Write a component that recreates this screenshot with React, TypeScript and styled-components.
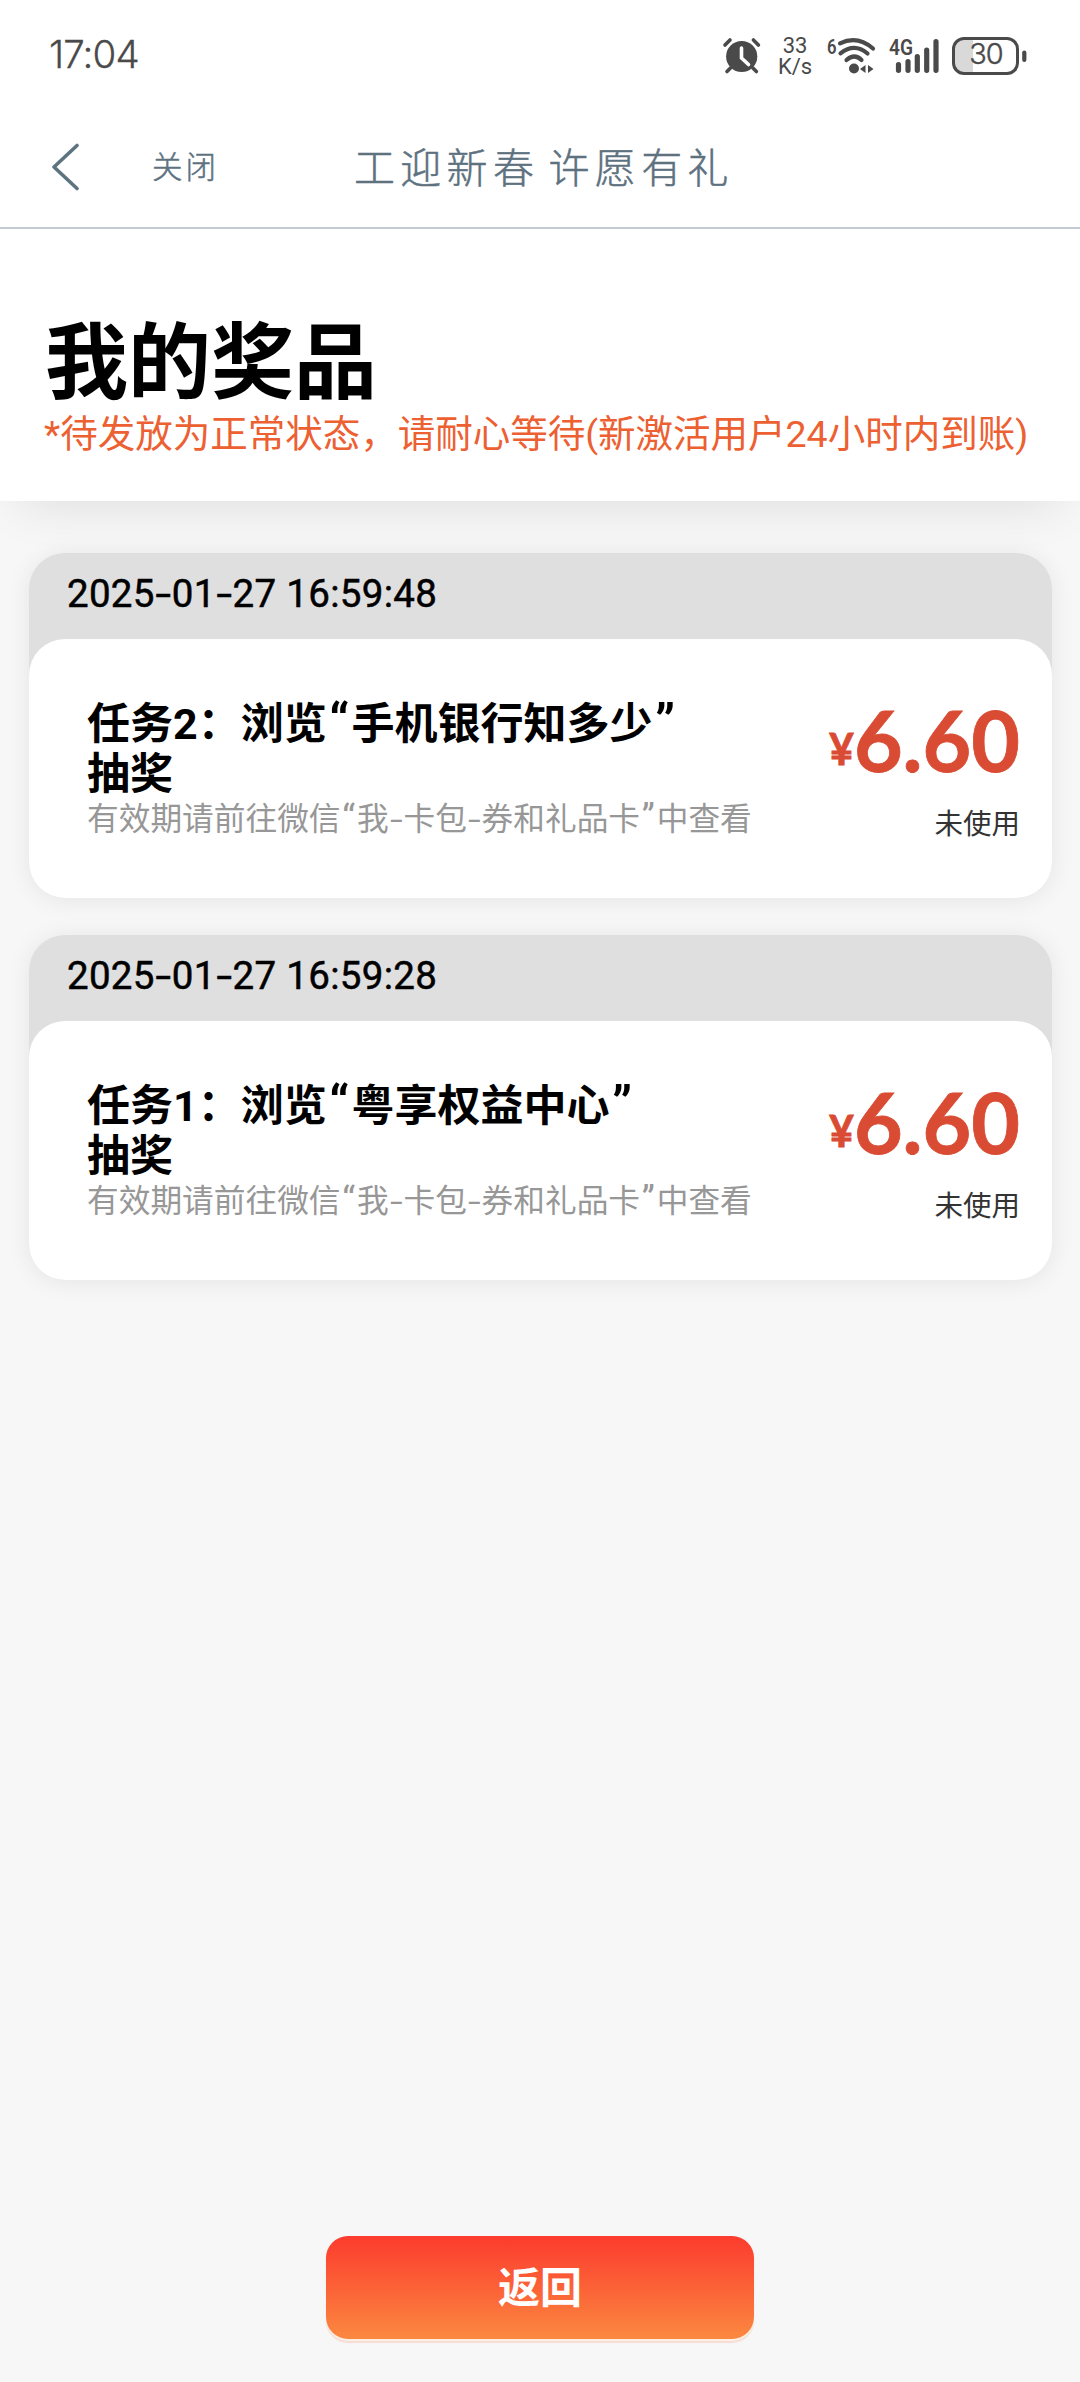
import React from 'react';
import styled, { createGlobalStyle } from 'styled-components';

const GlobalStyle = createGlobalStyle`
  * { box-sizing: border-box; }
  body {
    margin: 0;
    background: #f7f7f7;
    font-family: Roboto, "Noto Sans CJK SC", sans-serif;
    color: #000;
  }
`;

const Page = styled.div`
  width: 1080px;
  height: 2382px;
  display: flex;
  flex-direction: column;
  overflow: hidden;
`;

const StatusBar = styled.div`
  height: 108px;
  flex: none;
  padding: 0 53px 0 49px;
  display: flex;
  align-items: center;
  justify-content: space-between;
  background: #fff;
  color: #4a4a4a;
`;

const Clock = styled.div`
  font: 300 38.5px/44px Inter, sans-serif;
  letter-spacing: -0.9px;
  -webkit-text-stroke: 0.3px currentColor;
`;

const StatusIcons = styled.div`
  display: flex;
  align-items: center;
  padding-top: 3px;

  svg { display: block; overflow: visible; }
`;

const Speed = styled.div`
  width: 36px;
  margin: 0 14px 0 17px;
  display: flex;
  flex-direction: column;
  align-items: center;
  font: 400 22px/21px Roboto, sans-serif;
`;

const Indicators = styled.div`
  display: flex;
  align-items: center;
  gap: 13px;
`;

const NavBar = styled.nav`
  height: 121px;
  flex: none;
  position: relative;
  z-index: 1;
  display: flex;
  align-items: center;
  padding: 0 0 2px 50px;
  background: #fff;
  border-bottom: 2px solid #c3cad2;
  color: #5d717f;
  font-family: "Noto Sans CJK SC", sans-serif;
  font-weight: 300;
  -webkit-text-stroke: 0.5px currentColor;
`;

const CloseLabel = styled.span`
  width: 202px;
  margin-left: 72px;
  padding-bottom: 3px;
  font-size: 30.5px;
  line-height: 46px;
  letter-spacing: 3px;
`;

const NavTitle = styled.span`
  padding-bottom: 4px;
  font-size: 41px;
  line-height: 60px;
  letter-spacing: 5.3px;
  word-spacing: -5px;
  white-space: pre;
`;

const Header = styled.header`
  height: 272px;
  flex: none;
  padding: 82px 0 0 45px;
  background: #fff;
  box-shadow: 0 20px 50px -20px rgba(0, 0, 0, 0.12);
`;

const Title = styled.h1`
  margin: 0;
  font-size: 83px;
  line-height: 106px;
  font-weight: 700;
`;

const Notice = styled.p`
  margin: -6px 0 0 -1px;
  font-size: 37.5px;
  line-height: 46px;
  color: #ec6032;
  white-space: nowrap;
`;

const List = styled.main`
  flex: 1;
  display: flex;
  flex-direction: column;
  gap: 37px;
  padding: 52px 28px 0 29px;
`;

const Card = styled.section`
  height: 345px;
  display: flex;
  flex-direction: column;
  border-radius: 36px;
  background: #dfdfdf;
  box-shadow: 0 2px 24px rgba(0, 0, 0, 0.08);
`;

const CardDate = styled.div`
  height: 86px;
  padding: 17px 0 0 38px;
  font-size: 38.5px;
  line-height: 48px;
  letter-spacing: 0.3px;
  -webkit-text-stroke: 0.5px currentColor;
`;

const Dash = styled.span<{ $gap: number }>`
  display: inline-block;
  margin: 0 ${(p) => p.$gap}px;
  transform: scaleX(1.45);
`;

const Quote = styled.span`
  margin: 0 0.05em;
  font-size: 1.15em;
  line-height: 0;
`;

const CardBody = styled.div`
  flex: 1;
  display: flex;
  justify-content: space-between;
  padding: 60px 32px 0 58px;
  border-radius: 36px;
  background: #fff;
`;

const TaskName = styled.h2`
  width: 620px;
  margin: 0;
  font-size: 43px;
  line-height: 50px;
  font-weight: 700;
`;

const Validity = styled.p`
  margin: 1px 0 0;
  font-size: 31.7px;
  line-height: 40px;
  color: #979797;
  white-space: nowrap;
`;

const Reward = styled.div`
  display: flex;
  flex-direction: column;
  align-items: flex-end;
  margin-top: -4px;
`;

const Price = styled.div`
  display: flex;
  align-items: baseline;
  font: 700 84px/90px Lato, sans-serif;
  color: #d94b33;
  -webkit-text-stroke: 0.8px currentColor;
`;

const Yen = styled.span`
  position: relative;
  top: -7px;
  font-size: 43px;
`;

const State = styled.div`
  margin-top: 4px;
  font-size: 28.5px;
  line-height: 40px;
  color: #333;
`;

const Footer = styled.footer`
  display: flex;
  justify-content: center;
  padding-bottom: 43px;
`;

const BackButton = styled.button`
  width: 428px;
  height: 103px;
  border: 0;
  border-radius: 22px;
  padding: 0 0 5px;
  background: linear-gradient(#fc3b2e, #fb8840);
  box-shadow: 0 2px 0 #fdf0e3, 0 4px 1px #f6ddd5;
  font: 700 42px/60px "Noto Sans CJK SC", sans-serif;
  color: #fff;
`;

const AlarmIcon = () => (
  <svg width="37" height="36" viewBox="0 0 37 36" fill="none" stroke="#4a4a4a" strokeLinecap="round">
    <circle cx="18.7" cy="18.5" r="15.6" fill="#4a4a4a" stroke="none" />
    <path d="M2 7l5-5M35.400 7l-5-5M7.500 30l-3.500 3.500M29.900 30l3.500 3.500" strokeWidth="3.600" />
    <path d="M18.500 10v10l7 6.500" stroke="#fff" strokeWidth="3.600" />
  </svg>
);

const WifiIcon = () => (
  <svg width="49" height="36" viewBox="0 0 49 36" fill="none" stroke="#4a4a4a" strokeWidth="4.200" strokeLinecap="round">
    <text x="0" y="15.500" fontFamily="Roboto, sans-serif" fontSize="21" fontWeight="600" fill="#4a4a4a" stroke="none" textLength="9.500" lengthAdjust="spacingAndGlyphs">6</text>
    <path d="M13 5.300Q30.500-3 46 10.500M13.500 15.300Q27.500 4.500 40.500 15.500M19.500 22Q27.500 15 34.500 22" />
    <circle cx="27" cy="30.500" r="5" fill="#4a4a4a" stroke="none" />
    <path d="M38.500 27v8l-5.500-4zM41 27v8l5.500-4z" fill="#4a4a4a" stroke="none" />
  </svg>
);

const SignalIcon = () => (
  <svg width="50" height="36" viewBox="0 0 50 36" stroke="#4a4a4a" strokeWidth="5.200" strokeLinecap="round">
    <text x="0" y="17" fontFamily="Roboto, sans-serif" fontSize="22" fontWeight="600" fill="#4a4a4a" stroke="none" textLength="24" lengthAdjust="spacingAndGlyphs">4G</text>
    <path d="M9.500 26.500v5.800M19 23.500v8.800M28.300 18.500v13.800M37.700 12v20.300M47 3.500v28.800" />
  </svg>
);

const BatteryIcon = () => (
  <svg width="75" height="38" viewBox="0 0 75 38">
    <path d="M13 2h8v34h-8q-11 0-11-10v-14q0-10 11-10z" fill="#d9d9d9" />
    <rect x="1.500" y="1.500" width="64" height="35" rx="10.500" fill="none" stroke="#4a4a4a" strokeWidth="3" />
    <path d="M72.300 15.500v7.500" stroke="#4a4a4a" strokeWidth="4.200" strokeLinecap="round" />
    <text x="34" y="27" textAnchor="middle" fontFamily="Inter, sans-serif" fontSize="29" fontWeight="300" letterSpacing="-1" fill="#4a4a4a" stroke="#4a4a4a" strokeWidth="0.400">30</text>
  </svg>
);

const BackArrow = () => (
  <svg width="30" height="48" viewBox="0 0 30 48" fill="none" stroke="#5d7380" strokeWidth="3.600" strokeLinecap="round" strokeLinejoin="round">
    <path d="M27 2.500L4 24L27 45.500" />
  </svg>
);

const spaced = (text: string, gap: number) =>
  text.split(/([-“”])/).map((part, i) => {
    if (part === '-') return <Dash key={i} $gap={gap}>-</Dash>;
    if (part === '“' || part === '”') return <Quote key={i}>{part}</Quote>;
    return <React.Fragment key={i}>{part}</React.Fragment>;
  });

interface Prize {
  date: string;
  task: string;
  amount: string;
}

const prizes: Prize[] = [
  { date: '2025-01-27 16:59:48', task: '任务2：浏览“手机银行知多少”', amount: '6.60' },
  { date: '2025-01-27 16:59:28', task: '任务1：浏览“粤享权益中心”', amount: '6.60' },
];

const PrizeCard = ({ date, task, amount }: Prize) => (
  <Card>
    <CardDate>{spaced(date, 3)}</CardDate>
    <CardBody>
      <div>
        <TaskName>{spaced(task, 0)}<br />抽奖</TaskName>
        <Validity>{spaced('有效期请前往微信“我-卡包-券和礼品卡”中查看', 3)}</Validity>
      </div>
      <Reward>
        <Price><Yen>¥</Yen>{amount}</Price>
        <State>未使用</State>
      </Reward>
    </CardBody>
  </Card>
);

export default function App() {
  return (
    <Page>
      <GlobalStyle />
      <StatusBar>
        <Clock>17:04</Clock>
        <StatusIcons>
          <AlarmIcon />
          <Speed><span>33</span><span>K/s</span></Speed>
          <Indicators>
            <WifiIcon />
            <SignalIcon />
            <BatteryIcon />
          </Indicators>
        </StatusIcons>
      </StatusBar>
      <NavBar>
        <BackArrow />
        <CloseLabel>关闭</CloseLabel>
        <NavTitle>工迎新春 许愿有礼</NavTitle>
      </NavBar>
      <Header>
        <Title>我的奖品</Title>
        <Notice>*待发放为正常状态，请耐心等待(新激活用户24小时内到账)</Notice>
      </Header>
      <List>
        {prizes.map((prize) => <PrizeCard key={prize.date} {...prize} />)}
      </List>
      <Footer><BackButton>返回</BackButton></Footer>
    </Page>
  );
}
